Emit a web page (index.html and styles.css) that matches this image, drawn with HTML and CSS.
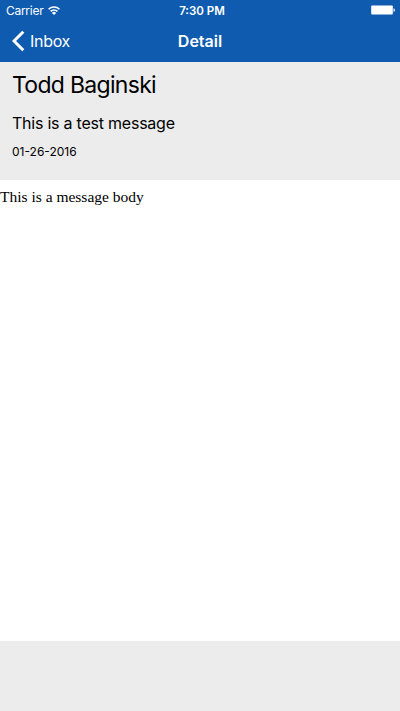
FILE: index.html
```html
<!DOCTYPE html>
<html lang="en">
<head>
<meta charset="utf-8">
<title>Detail</title>
<link rel="stylesheet" href="styles.css">
</head>
<body>
<div class="screen">
  <header class="top">
    <div class="status">
      <div class="carrier"><span>Carrier</span>
        <svg class="wifi" viewBox="0 0 12 9" width="12" height="9"><path d="M0.6 3.2a7.6 7.6 0 0 1 10.8 0M2.6 5.4a4.8 4.8 0 0 1 6.8 0" fill="none" stroke="#fff" stroke-width="1.6"/><path d="M3.9 6.9a3 3 0 0 1 4.2 0L6 9z" fill="#fff"/></svg>
      </div>
      <span class="time">7:30 PM</span>
      <svg class="battery" viewBox="0 0 25 10" width="25" height="10"><rect x="0.2" y="0.4" width="21.6" height="9.2" rx="0.8" fill="#fff"/><path d="M22.5 3.4h.8q1.4 1.7 0 3.4h-.8z" fill="#fff"/></svg>
    </div>
    <nav class="nav">
      <a class="back"><svg viewBox="0 0 13 22" width="13" height="22"><path d="M11.3 1.7L2 11l9.3 9.3" fill="none" stroke="#fff" stroke-width="3"/></svg><span class="label">Inbox</span></a>
      <h1>Detail</h1>
      <span></span>
    </nav>
  </header>
  <section class="summary">
    <h2>Todd Baginski</h2>
    <p class="subject">This is a test message</p>
    <p class="date">01-26-2016</p>
  </section>
  <main class="body">This is a message body</main>
</div>
</body>
</html>
```
FILE: styles.css
```css
* { box-sizing: border-box; margin: 0; }
body { background: #ececec; font-family: Inter, "Liberation Sans", sans-serif; color: #000; }
.screen { height: 711px; display: flex; flex-direction: column; }
.top { height: 62px; background: #0e5bb0; color: #fff; }
.status { height: 20px; display: grid; grid-template-columns: 1fr auto 1fr; align-items: center; padding: 0 4px 0 6px; font-size: 12px; }
.carrier { display: flex; align-items: center; gap: 5px; letter-spacing: -0.28px; }
.time { font-weight: 600; font-size: 11.5px; padding: 1px 0 0 2px; }
.battery { justify-self: end; }
.nav { height: 42px; display: grid; grid-template-columns: 1fr auto 1fr; align-items: center; padding: 0 12px; }
.back { display: flex; align-items: center; gap: 5px; font-size: 16px; letter-spacing: -0.3px; }
.label { padding-bottom: 1px; }
.nav h1 { font-size: 16px; font-weight: 600; padding-bottom: 1px; }
.summary { height: 118px; padding: 7px 12px; }
.summary h2 { font-size: 23px; font-weight: 400; line-height: 32px; letter-spacing: -0.7px; }
.subject { font-size: 16px; line-height: 24px; margin-top: 10px; letter-spacing: -0.23px; }
.date { font-size: 12px; line-height: 16px; margin-top: 9px; }
.body { height: 461px; background: #fff; padding-top: 8px; font: 15.5px/18px "Liberation Serif", serif; }
```
